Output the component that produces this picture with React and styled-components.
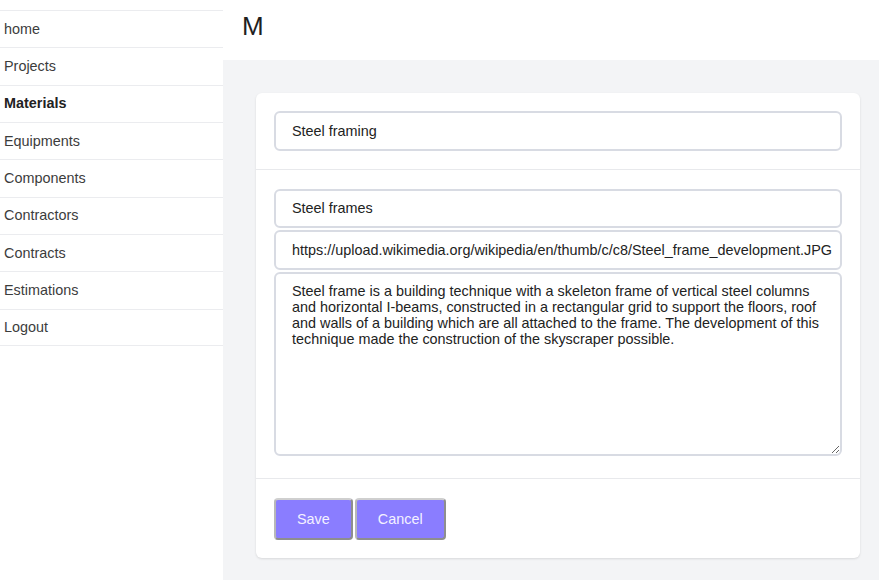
import React from "react";
import styled, { createGlobalStyle } from "styled-components";

const Global = createGlobalStyle`
  html, body { margin: 0; padding: 0; }
  body { font-family: "Liberation Sans", Arial, sans-serif; background: #fff; }
  #root { min-height: 100vh; display: flex; }
  * { box-sizing: border-box; }
`;

const Layout = styled.div`
  display: flex;
  flex: 1;
  min-height: 100vh;
`;

const Sidebar = styled.nav`
  width: 223px;
  flex-shrink: 0;
  padding-top: 10px;
  background: #fff;
`;

const NavItem = styled.div`
  height: 37.33px;
  display: flex;
  align-items: center;
  padding: 0 4px 1px;
  border-top: 1px solid #ebecef;
  font-size: 14.4px;
  color: ${(p) => (p.$active ? "#222" : "#3c3c3c")};
  font-weight: ${(p) => (p.$active ? 700 : 400)};
  &:last-child { border-bottom: 1px solid #ebecef; }
`;

const Main = styled.main`
  flex: 1;
  display: flex;
  flex-direction: column;
`;

const Header = styled.header`
  height: 60px;
  padding: 11px 0 0 19px;
  font-size: 26px;
  color: #1f1f1f;
  background: #fff;
`;

const Content = styled.div`
  flex: 1;
  background: #f3f4f6;
  padding: 33px 19px 22px 33px;
`;

const Card = styled.div`
  background: #fff;
  border-radius: 6px;
  box-shadow: 0 1px 3px rgba(0, 0, 0, 0.08), 0 1px 2px rgba(0, 0, 0, 0.04);
`;

const Section = styled.div`
  padding: ${(p) => p.$pad || "18px"};
  display: flex;
  flex-direction: column;
  gap: 2px;
  & + & { border-top: 1px solid #e8e9ec; }
`;

const fieldStyles = `
  width: 100%;
  font-family: "Liberation Sans", Arial, sans-serif;
  font-size: 14.4px;
  color: #222;
  background: #fff;
  border: 2px solid #d8dbe3;
  border-radius: 6px;
  padding: 0 2px 0 16px;
  outline: none;
`;

const Input = styled.input`
  ${fieldStyles}
  height: 39.5px;
`;

const TextArea = styled.textarea`
  ${fieldStyles}
  height: 184px;
  padding: 9px 16px;
  line-height: 16.33px;
  resize: vertical;
  display: block;
`;

const Footer = styled.div`
  padding: 19px 18px 18px 18px;
  display: flex;
  gap: 2px;
  border-top: 1px solid #e8e9ec;
`;

const Button = styled.button`
  height: 42px;
  padding: 0 21px;
  font-family: "Liberation Sans", Arial, sans-serif;
  font-size: 14.4px;
  color: #f4f2ff;
  background: #8a7dff;
  border: 2px solid;
  border-color: #cfcfcf #8e8e8e #8e8e8e #b8b8b8;
  border-radius: 4px;
  cursor: pointer;
`;

const navItems = [
  "home",
  "Projects",
  "Materials",
  "Equipments",
  "Components",
  "Contractors",
  "Contracts",
  "Estimations",
  "Logout",
];

const description =
  "Steel frame is a building technique with a skeleton frame of vertical steel columns and horizontal I-beams, constructed in a rectangular grid to support the floors, roof and walls of a building which are all attached to the frame. The development of this technique made the construction of the skyscraper possible.";

export default function App() {
  return (
    <>
      <Global />
      <Layout>
        <Sidebar>
          {navItems.map((n) => (
            <NavItem key={n} $active={n === "Materials"}>
              {n}
            </NavItem>
          ))}
        </Sidebar>
        <Main>
          <Header>M</Header>
          <Content>
            <Card>
              <Section $pad="18px">
                <Input defaultValue="Steel framing" />
              </Section>
              <Section $pad="19px 18px 22px 18px">
                <Input defaultValue="Steel frames" />
                <Input defaultValue="https://upload.wikimedia.org/wikipedia/en/thumb/c/c8/Steel_frame_development.JPG" />
                <TextArea defaultValue={description} />
              </Section>
              <Footer>
                <Button>Save</Button>
                <Button>Cancel</Button>
              </Footer>
            </Card>
          </Content>
        </Main>
      </Layout>
    </>
  );
}
